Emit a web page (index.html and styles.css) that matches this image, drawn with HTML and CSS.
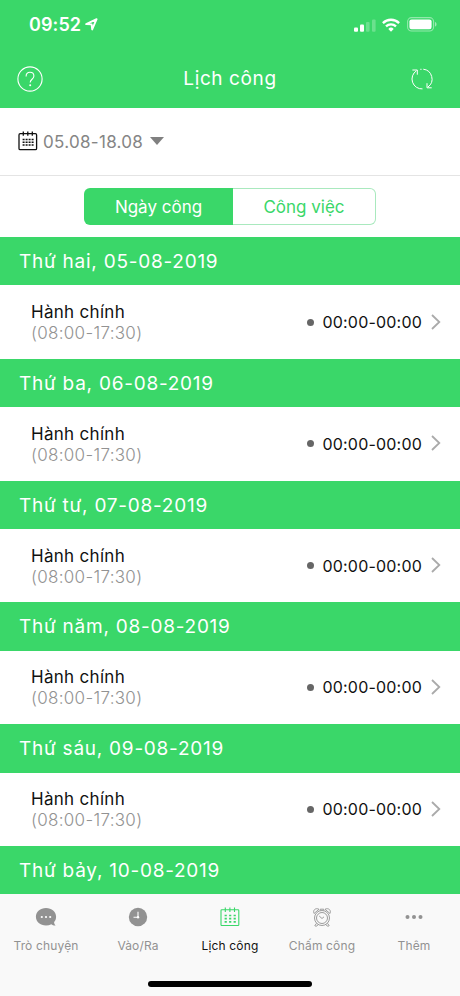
FILE: index.html
```html
<!DOCTYPE html>
<html lang="vi">
<head>
    <meta charset="UTF-8">
    <meta name="viewport" content="width=device-width, initial-scale=1.0">
    <title>Lịch công</title>
    <link rel="stylesheet" href="styles.css">
</head>
<body>
    <div class="app">
        <header class="header">
            <div class="status-bar">
                <span class="clock">09:52</span>
                <svg class="location" width="13" height="13" viewBox="0 0 13 13">
                    <path d="M1.2 6.1 11.6 1.2 7.2 11.4 6.6 6.4Z" fill="none" stroke="#fff" stroke-width="1.9" stroke-linejoin="round"/>
                </svg>
                <svg class="signal" width="22" height="14" viewBox="0 0 22 14" fill="#fff">
                    <rect x="0" y="9.5" width="4" height="4.3" rx="1"/>
                    <rect x="6" y="6.5" width="4" height="7.3" rx="1"/>
                    <rect x="12" y="4" width="3.6" height="9.8" rx="1" opacity=".25"/>
                    <rect x="18" y="1.5" width="3.6" height="12.3" rx="1" opacity=".25"/>
                </svg>
                <svg class="wifi" width="18" height="14" viewBox="0 0 18 14" fill="none" stroke="#fff" stroke-width="2.3">
                    <path d="M.9 5.1a11.5 11.5 0 0 1 16.2 0"/>
                    <path d="M4 8.4a7.1 7.1 0 0 1 10 0"/>
                    <path d="M9 13.7 6.3 10.9a3.9 3.9 0 0 1 5.4 0Z" fill="#fff" stroke="none"/>
                </svg>
                <svg class="battery" width="30" height="15" viewBox="0 0 30 15">
                    <rect x=".6" y=".6" width="26" height="13.4" rx="4" fill="none" stroke="#fff" stroke-opacity=".45" stroke-width="1.1"/>
                    <rect x="2.4" y="2.4" width="22.2" height="9.8" rx="2.2" fill="#fff"/>
                    <path d="M28 5v4.6c1-.4 1.5-1.2 1.5-2.3S29 5.4 28 5Z" fill="#fff" fill-opacity=".5"/>
                </svg>
            </div>
            <div class="nav-bar">
                <svg width="26" height="26" viewBox="0 0 26 26" fill="none" stroke="#fff" stroke-width="1.1">
                    <circle cx="13" cy="13" r="12.1"/>
                    <path d="M9.1 10.4c0-2.5 1.6-4.1 3.9-4.1s3.9 1.5 3.9 3.7c0 3.2-3.7 3.3-3.7 6.5"/>
                    <circle cx="13.2" cy="19.3" r="1" fill="#fff" stroke="none"/>
                </svg>
                <h1>Lịch công</h1>
                <svg width="24" height="24" viewBox="0 0 24 24" fill="none" stroke="#fff" stroke-width="1">
                    <path d="M12.5 21.9A9.9 9.9 0 0 1 6.4 3.8"/>
                    <path d="M2.4 3h4.9v4.7"/>
                    <path d="M13.3 2.2A9.9 9.9 0 0 1 18 20"/>
                    <path d="M21.7 20.8h-4.700v-4.600"/>
                    <path d="M10.3 2.3h1.2"/>
                </svg>
            </div>
        </header>

        <div class="date-filter">
            <svg class="calendar" width="20" height="20" viewBox="0 0 20 20" fill="none" stroke="currentColor">
                <rect x="1" y="2.7" width="17.6" height="16" rx="1.2" stroke-width="1.3"/>
                <path d="M5.3.5v4.3M9.8.5v4.3M14.3.5v4.3" stroke-width="1.3"/>
                <path d="M4.6 8.5h11M4.6 11.2h11M4.6 13.9h11" stroke-width="1.5" stroke-dasharray="2 1"/>
            </svg>
            <span class="range">05.08-18.08</span>
            <i class="caret"></i>
        </div>

        <div class="tabs">
            <button class="tab selected">Ngày công</button>
            <button class="tab">Công việc</button>
        </div>

        <main class="schedule">
            <h2>Thứ hai, 05-08-2019</h2>
            <div class="shift">
                <div class="shift-info">
                    <strong>Hành chính</strong>
                    <span>(08:00-17:30)</span>
                </div>
                <i class="dot"></i>
                <span class="hours">00:00-00:00</span>
                <svg class="chevron" width="10" height="16" viewBox="0 0 10 16"><path d="M1 1l7.3 7L1 15"/></svg>
            </div>

            <h2>Thứ ba, 06-08-2019</h2>
            <div class="shift">
                <div class="shift-info">
                    <strong>Hành chính</strong>
                    <span>(08:00-17:30)</span>
                </div>
                <i class="dot"></i>
                <span class="hours">00:00-00:00</span>
                <svg class="chevron" width="10" height="16" viewBox="0 0 10 16"><path d="M1 1l7.3 7L1 15"/></svg>
            </div>

            <h2>Thứ tư, 07-08-2019</h2>
            <div class="shift">
                <div class="shift-info">
                    <strong>Hành chính</strong>
                    <span>(08:00-17:30)</span>
                </div>
                <i class="dot"></i>
                <span class="hours">00:00-00:00</span>
                <svg class="chevron" width="10" height="16" viewBox="0 0 10 16"><path d="M1 1l7.3 7L1 15"/></svg>
            </div>

            <h2>Thứ năm, 08-08-2019</h2>
            <div class="shift">
                <div class="shift-info">
                    <strong>Hành chính</strong>
                    <span>(08:00-17:30)</span>
                </div>
                <i class="dot"></i>
                <span class="hours">00:00-00:00</span>
                <svg class="chevron" width="10" height="16" viewBox="0 0 10 16"><path d="M1 1l7.3 7L1 15"/></svg>
            </div>

            <h2>Thứ sáu, 09-08-2019</h2>
            <div class="shift">
                <div class="shift-info">
                    <strong>Hành chính</strong>
                    <span>(08:00-17:30)</span>
                </div>
                <i class="dot"></i>
                <span class="hours">00:00-00:00</span>
                <svg class="chevron" width="10" height="16" viewBox="0 0 10 16"><path d="M1 1l7.3 7L1 15"/></svg>
            </div>

            <h2>Thứ bảy, 10-08-2019</h2>
        </main>

        <footer class="footer">
            <nav class="tab-bar">
                <a class="item">
                    <svg width="22" height="20" viewBox="0 0 22 20">
                        <path d="M11 1C5.3 1 .9 4.7.9 9.7s4.4 8.7 10.1 8.7c2 0 3.8-.4 5.3-1.2 1.1.9 2.6 1.3 4.3 1.2-1-.8-1.5-1.9-1.5-3.3 1.3-1.4 2-3.3 2-5.4C21.1 4.7 16.7 1 11 1Z" fill="#929292"/>
                        <g fill="#fff"><circle cx="6.8" cy="10" r="1.1"/><circle cx="11" cy="10" r="1.1"/><circle cx="15.2" cy="10" r="1.1"/></g>
                    </svg>
                    <span>Trò chuyện</span>
                </a>
                <a class="item">
                    <svg width="20" height="20" viewBox="0 0 20 20">
                        <circle cx="10" cy="10" r="9.2" fill="#929292"/>
                        <path d="M10 4.8v5.4H5.5" fill="none" stroke="#fff" stroke-width="1.1"/>
                        <circle cx="10" cy="10.2" r="1.2" fill="#fff"/>
                    </svg>
                    <span>Vào/Ra</span>
                </a>
                <a class="item active">
                    <svg width="20" height="20" viewBox="0 0 20 20" fill="none" stroke="#3ad769">
                        <rect x="1" y="2.7" width="17.8" height="15.8" rx=".8" stroke-width="1.1"/>
                        <path d="M5.3.5v4.4M9.9.5v4.4M14.5.5v4.4" stroke-width="1.1"/>
                        <path d="M4.6 8.5h11.2M4.6 11.7h11.2M4.6 14.9h11.2" stroke-width="1.7" stroke-dasharray="2.2 2.3"/>
                    </svg>
                    <span>Lịch công</span>
                </a>
                <a class="item">
                    <svg width="20" height="20" viewBox="0 0 20 20" fill="none" stroke="#929292" stroke-width=".9">
                        <circle cx="10" cy="11" r="7.5"/>
                        <circle cx="10" cy="11" r="5.5"/>
                        <path d="M2 6.500C.5 3.500 3.500.3 7 2.300L2 6.500ZM18 6.500c1.500-3-1.500-6.200-5-4.200l5 4.200ZM8.200 3.500V2.200h3.600v1.300M7.200 9l2.800 2.500 2-1.700M4.500 16.300l-1.700 2.400 1.300.6 2.200-1.600M15.500 16.300l1.700 2.400-1.300.6-2.200-1.600"/>
                    </svg>
                    <span>Chấm công</span>
                </a>
                <a class="item">
                    <svg width="20" height="20" viewBox="0 0 20 20" fill="#929292">
                        <circle cx="3.5" cy="10" r="2"/>
                        <circle cx="10" cy="10" r="2"/>
                        <circle cx="16.5" cy="10" r="2"/>
                    </svg>
                    <span>Thêm</span>
                </a>
            </nav>
            <div class="home-indicator"></div>
        </footer>
    </div>
</body>
</html>
```
FILE: styles.css
```css
:root {
    --primary-color: #3ad769;
    --text-color: #111;
    --text-light: #929292;
}

* {
    box-sizing: border-box;
    font-family: Inter, "Noto Sans", sans-serif;
}

body {
    margin: 0;
    background-color: #fff;
    color: var(--text-color);
}

svg {
    display: block;
    flex-shrink: 0;
}

.app {
    display: flex;
    flex-direction: column;
    width: 460px;
    height: 996px;
    overflow: hidden;
}

/* Header */
.header {
    height: 107.5px;
    background-color: var(--primary-color);
    color: #fff;
    flex-shrink: 0;
}

.status-bar {
    display: flex;
    align-items: center;
    height: 49px;
    padding: 0 23px 0 29px;
}

.clock {
    font-size: 18px;
    font-weight: 600;
    letter-spacing: 0.1px;
    margin-right: 4px;
}

.signal {
    margin-left: auto;
    margin-right: 6px;
}

.wifi {
    margin-right: 7px;
}

.nav-bar {
    display: flex;
    align-items: center;
    justify-content: space-between;
    height: 58px;
    padding: 1px 26px 0 17px;
}

h1 {
    margin: 0;
    padding-left: 7px;
    font-size: 19px;
    font-weight: 400;
    letter-spacing: 0.6px;
}

/* Date range */
.date-filter {
    display: flex;
    align-items: center;
    height: 68.5px;
    padding-left: 18px;
    border-bottom: 1px solid #e4e4e4;
    color: #858585;
    font-size: 17px;
    letter-spacing: 0.3px;
    flex-shrink: 0;
}

.calendar {
    margin-right: 5px;
    color: #111;
}

.range {
    padding-top: 1px;
}

.caret {
    margin-left: 7px;
    border: 7px solid transparent;
    border-top: 8px solid #808080;
    border-bottom: 0;
}

/* Switch */
.tabs {
    display: flex;
    height: 61px;
    padding: 12px 84px;
    flex-shrink: 0;
}

.tab {
    width: 143px;
    padding: 0;
    border: 1px solid #a9e9be;
    border-left: 0;
    border-radius: 0 6px 6px 0;
    background-color: #fff;
    color: var(--primary-color);
    font-size: 17px;
    letter-spacing: 0;
}

.tab.selected {
    width: 149px;
    border: 0;
    border-radius: 6px 0 0 6px;
    background-color: var(--primary-color);
    color: #fff;
}

/* Schedule */
.schedule {
    flex: 1;
    overflow: hidden;
}

h2 {
    height: 48.4px;
    margin: 0;
    padding-left: 19px;
    background-color: var(--primary-color);
    color: #fff;
    font-size: 19px;
    font-weight: 400;
    line-height: 50px;
    letter-spacing: 0.75px;
}

.shift {
    display: flex;
    align-items: center;
    height: 73.4px;
    padding: 0 19px 0 31px;
}

.shift-info {
    flex: 1;
    padding-top: 2px;
}

.shift-info strong,
.shift-info span {
    display: block;
    font-size: 17px;
    font-weight: 400;
    line-height: 21px;
    letter-spacing: 0.3px;
}

.shift-info span {
    color: var(--text-light);
    font-weight: 300;
}

.dot {
    width: 7px;
    height: 7px;
    margin-right: 8px;
    border-radius: 50%;
    background-color: #666;
}

.hours {
    font-size: 16px;
    font-weight: 400;
    letter-spacing: 0.2px;
}

.chevron {
    margin: 0 0 1px 9px;
    fill: none;
    stroke: #aaa;
    stroke-width: 1.8;
}

/* Bottom bar */
.footer {
    height: 102px;
    background-color: #f9f9f9;
    flex-shrink: 0;
}

.tab-bar {
    display: flex;
    height: 86px;
    padding-top: 13px;
}

.item {
    display: flex;
    flex: 1;
    flex-direction: column;
    align-items: center;
    gap: 10px;
    color: var(--text-light);
    font-size: 12px;
    line-height: 18px;
    letter-spacing: 0.15px;
    white-space: nowrap;
}

.item.active {
    color: var(--text-color);
}

.home-indicator {
    width: 164px;
    height: 6px;
    margin: 1px auto 0;
    border-radius: 3px;
    background-color: #000;
}
```
